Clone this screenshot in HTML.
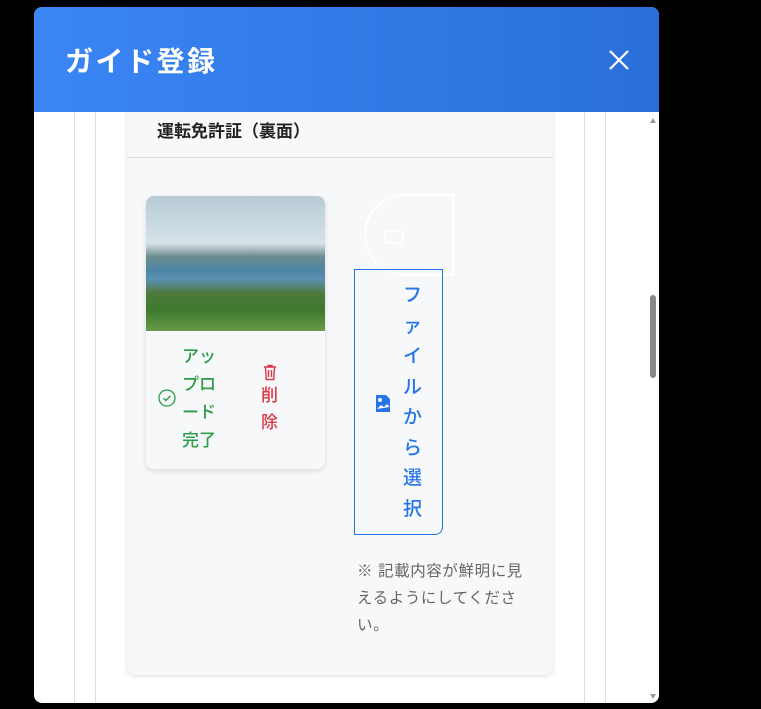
<!DOCTYPE html>
<html><head><meta charset="utf-8"><style>
*{box-sizing:border-box;margin:0;padding:0}
body{width:761px;height:709px;background:#000;position:relative;overflow:hidden;font-family:"Liberation Sans","Noto Sans CJK JP",sans-serif}
.modal{position:absolute;left:34px;top:7px;width:625px;height:696px;background:#fff;border-radius:8px;overflow:hidden}
.hdr{position:absolute;left:0;top:0;width:625px;height:105px;background:linear-gradient(90deg,#3a86f5,#2a6fd9)}
.hdr h1{position:absolute;left:31px;top:33px;color:#fff;font-size:28px;font-weight:bold;letter-spacing:2.5px}
.vl{position:absolute;top:105px;bottom:0;width:1px;background:#ddd}
.card{position:absolute;left:93px;top:90px;width:426px;height:578px;background:#f7f8fa;border-radius:8px;box-shadow:0 1px 4px rgba(0,0,0,.15)}
.ct{position:absolute;left:30px;top:20px;font-size:17px;font-weight:bold;color:#222}
.sep{position:absolute;left:0;right:0;top:60px;height:1px;background:#ddd}
.pic{position:absolute;left:19px;top:99px;width:179px;height:273px;background:#f7f8fa;border-radius:8px;box-shadow:0 2px 6px rgba(0,0,0,.12);overflow:hidden}
.img{height:135px;background:linear-gradient(180deg,#b7cbd6 0%,#d6e2e8 35%,#6d8b8e 45%,#4d86a6 55%,#5b8fb0 62%,#4d7a3c 72%,#3f7a2e 85%,#6a9a48 100%)}
.up{position:absolute;left:36px;top:147px;width:36px;color:#2e9b4a;font-size:17px;line-height:28px;font-weight:500}
.del{position:absolute;left:115px;top:186px;color:#dc3545;font-size:17px;line-height:27px;width:20px;font-weight:500}
.btn{position:absolute;left:227px;top:172px;width:89px;height:266px;border:1px solid #2575e8;border-radius:0 0 8px 0;color:#2575e8;font-size:19px;line-height:30.5px;font-weight:500}
.btn .t{position:absolute;left:48px;top:11px;width:22px}
.note{position:absolute;left:230px;top:461px;width:200px;font-size:15.5px;line-height:27px;color:#666;white-space:nowrap;letter-spacing:.6px}
.sb{position:absolute;right:0;top:105px;width:12px;bottom:0;background:#fff}
</style></head><body>
<div class="modal">
 <div class="vl" style="left:40px"></div><div class="vl" style="left:61px"></div>
 <div class="vl" style="left:550px"></div><div class="vl" style="left:571px"></div>
 <div class="card">
  <div class="ct">運転免許証（裏面）</div>
  <div class="sep"></div>
  <div class="pic"><div class="img"></div>
   <svg style="position:absolute;left:12px;top:193px" width="18" height="18" viewBox="0 0 18 18"><circle cx="9" cy="9" r="8" fill="none" stroke="#2e9b4a" stroke-width="1.3"/><path d="M5.5 9.2l2.4 2.3 4.5-4.6" fill="none" stroke="#2e9b4a" stroke-width="1.4"/></svg>
   <div class="up">アップロード完了</div>
   <svg style="position:absolute;left:116px;top:168px" width="16" height="17" viewBox="0 0 16 17"><path d="M2 3h12M6 3V1.5h4V3M3.5 3.5l.8 12h7.4l.8-12M6.5 6v7M9.5 6v7" fill="none" stroke="#dc3545" stroke-width="1.4"/></svg>
   <div class="del">削除</div>
  </div>
  <svg style="position:absolute;left:238px;top:96px" width="92" height="84" viewBox="0 0 92 84"><path d="M88 2H40a40 40 0 0 0 0 80h48z" fill="none" stroke="#fff" stroke-width="2"/><rect x="20" y="38" width="18" height="12" rx="2" fill="none" stroke="#fff" stroke-width="1.5"/></svg>
  <div class="btn">
   <svg style="position:absolute;left:20px;top:124px" width="16" height="19" viewBox="0 0 16 19"><path d="M1 1h10l4 4v13H1z" fill="#2575e8"/><circle cx="5" cy="6" r="2" fill="#fff"/><path d="M2 15l4-4 3 2 3-3 2 2v1z" fill="#fff"/></svg>
   <div class="t">ファイルから選択</div>
  </div>
  <div class="note">※ 記載内容が鮮明に見<br>えるようにしてくださ<br>い。</div>
 </div>
 <div class="hdr"><h1>ガイド登録</h1>
  <svg style="position:absolute;left:574px;top:42px" width="22" height="22" viewBox="0 0 22 22"><path d="M2 2l18 18M20 2L2 20" stroke="#fff" stroke-width="2.2"/></svg>
 </div>
 <div class="sb">
  <div style="position:absolute;left:3px;top:6px;width:0;height:0;border:3px solid transparent;border-bottom:5px solid #999;border-top:0"></div>
  <div style="position:absolute;left:3px;top:183px;width:6px;height:83px;background:#888;border-radius:3px"></div>
  <div style="position:absolute;left:3px;bottom:4px;width:0;height:0;border:3px solid transparent;border-top:5px solid #999;border-bottom:0"></div>
 </div>
</div>
</body></html>
